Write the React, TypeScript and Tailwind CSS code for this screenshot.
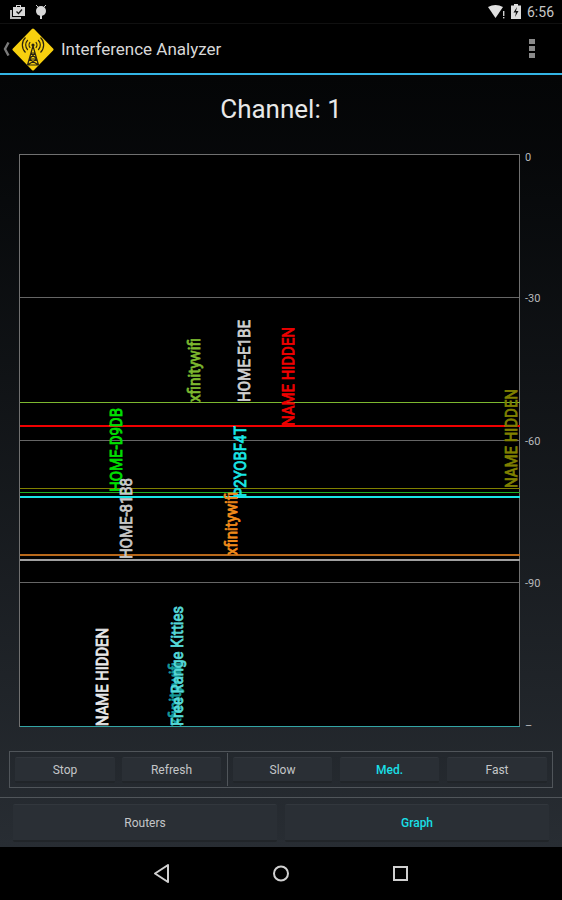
import React from 'react';

const grid = [297, 440, 582];

const lines = [
  { y: 402, color: '#7cb82f', w: 1 },
  { y: 426, color: '#f00000', w: 2 },
  { y: 488, color: '#808000', w: 1 },
  { y: 492, color: '#22b022', w: 1 },
  { y: 497, color: '#19e6e6', w: 2 },
  { y: 555, color: '#b8681a', w: 2 },
  { y: 560, color: '#a0a0a0', w: 2 },
  { y: 726, color: '#33a5a5', w: 1 },
];

const labels = [
  { text: 'xfinitywifi', x: 200, y: 402, len: 64, color: '#7cb82f' },
  { text: 'HOME-E1BE', x: 250, y: 402, len: 82, color: '#d0d0d0' },
  { text: 'NAME HIDDEN', x: 294, y: 426, len: 99, color: '#f00000' },
  { text: 'HOME-D9DB', x: 122, y: 492, len: 84, color: '#00e000' },
  { text: 'HOME-81B8', x: 132, y: 559, len: 81, color: '#c8c8c8' },
  { text: 'P2YOBF4T', x: 246, y: 497, len: 71, color: '#19e6e6' },
  { text: 'xfinitywifi', x: 237, y: 555, len: 63, color: '#f08a1a' },
  { text: 'NAME HIDDEN', x: 517, y: 488, len: 99, color: '#808000' },
  { text: 'NAME HIDDEN', x: 108, y: 726, len: 98, color: '#e8e8e8' },
  { text: 'xfinitywifi', x: 181, y: 726, len: 64, color: '#159a9a' },
  { text: 'Free Range Kitties', x: 183, y: 726, len: 120, color: '#55d8d8' },
];

const axis = [
  { text: '0', y: 161 },
  { text: '-30', y: 302 },
  { text: '-60', y: 445 },
  { text: '-90', y: 587 },
  { text: '–', y: 729 },
];

function Btn({ label, active, className }: { label: string; active?: boolean; className: string }) {
  return (
    <div
      className={`flex items-center justify-center pt-px rounded-[2px] bg-[#2a2f35] border-t border-t-[#32373d] border-b-2 border-b-[#212529] ${className} ${active ? 'text-[#19dfe6] font-medium' : 'text-[#c4c6c8] font-normal'}`}
    >
      {label}
    </div>
  );
}

function Chart() {
  return (
    <svg width="543" height="584" viewBox="19 150 543 584" className="block ml-[19px]">
      <rect x="19.5" y="154.5" width="500" height="572" fill="#000" stroke="#707070" strokeWidth="1" />
      {grid.map((y) => (
        <line key={y} x1="20" x2="519" y1={y + 0.5} y2={y + 0.5} stroke="#666" strokeWidth="1" />
      ))}
      {lines.map((l) => (
        <line key={l.y} x1="20" x2="520" y1={l.w === 1 ? l.y + 0.5 : l.y} y2={l.w === 1 ? l.y + 0.5 : l.y} stroke={l.color} strokeWidth={l.w} />
      ))}
      {labels.map((l, i) => (
        <text
          key={i}
          transform={`rotate(-90 ${l.x} ${l.y})`}
          x={l.x}
          y={l.y}
          fontFamily="Roboto, sans-serif"
          fontSize="17"
          textLength={l.len}
          lengthAdjust="spacingAndGlyphs"
          fill={l.color}
          stroke={l.color}
          strokeWidth="0.8"
        >
          {l.text}
        </text>
      ))}
      {axis.map((a) => (
        <text key={a.text} x="525" y={a.y} fontFamily="Roboto, sans-serif" fontSize="11" fill="#b8babc">
          {a.text}
        </text>
      ))}
    </svg>
  );
}

function Logo() {
  return (
    <svg width="42" height="43" viewBox="0 0 42 43" className="block">
      <path d="M21 2 L40 21.5 L21 41 L2 21.5 Z" fill="#f7d00f" stroke="#f7d00f" strokeLinejoin="round" strokeWidth="3" />
      <g fill="none" stroke="#2a2410" strokeWidth="1.2">
        <path d="M21 18 L15.5 37 M21 18 L26.5 37 M18.5 25 H23.5 M17 31 H25 M15.5 37 H26.5 M18.5 25 L25 31 M23.5 25 L17 31 M17 31 L26.5 37 M25 31 L15.5 37" />
        <path d="M18.2 19.8 A4 4 0 0 1 18.2 14.2 M23.8 19.8 A4 4 0 0 0 23.8 14.2" />
        <path d="M15.8 22 A7 7 0 0 1 15.8 12 M26.2 22 A7 7 0 0 0 26.2 12" />
        <path d="M13.5 24.5 A10.5 10.5 0 0 1 13.5 9.5 M28.5 24.5 A10.5 10.5 0 0 0 28.5 9.5" />
      </g>
      <circle cx="21" cy="17" r="1.6" fill="#2a2410" />
    </svg>
  );
}

export default function App() {
  return (
    <div className="w-[562px] h-[900px] flex flex-col bg-black font-['Roboto',sans-serif] overflow-hidden">
      {/* status bar */}
      <div className="h-[24px] flex items-center px-[8px] border-b border-b-[#101010]">
        <svg width="17" height="16" viewBox="0 0 17 16" className="ml-[1px]">
          <path d="M1 6 H3 V13 H12 V15 H1 Z" fill="#b8b8b8" />
          <path d="M4 3 H7 V1 H12 V3 H16 V12 H4 Z M8 2 V3 H11 V2 Z" fill="#d8d8d8" />
          <path d="M7.5 7.5 L9.5 9.5 L13 5.5" fill="none" stroke="#111" strokeWidth="1.3" />
        </svg>
        <svg width="12" height="16" viewBox="0 0 12 16" className="ml-[9px]">
          <path d="M1 1 L3 3 M11 1 L9 3" stroke="#ccc" strokeWidth="1" />
          <circle cx="6" cy="7" r="5" fill="#d8d8d8" />
          <rect x="5" y="11" width="2" height="4" fill="#d8d8d8" />
        </svg>
        <div className="flex-1" />
        <svg width="17" height="14" viewBox="0 0 17 14">
          <path d="M0 2 Q7.5 -2 15 2 L7.5 13 Z" fill="#e0e0e0" />
          <rect x="15" y="6" width="1.4" height="5" fill="#d0d0d0" />
          <rect x="15" y="12" width="1.4" height="1.4" fill="#d0d0d0" />
        </svg>
        <svg width="10" height="15" viewBox="0 0 10 15" className="ml-[6px]">
          <path d="M3 0 H7 V1.5 H10 V15 H0 V1.5 H3 Z" fill="#dcdcdc" />
          <path d="M6 3 L2.5 8.5 H5 L4 13 L7.5 7 H5 Z" fill="#111" />
        </svg>
        <span className="ml-[6px] pt-px text-[14px] leading-none text-[#c8c8c8]">6:56</span>
      </div>

      {/* action bar */}
      <div className="h-[49px] flex items-center">
        <svg width="7" height="14" viewBox="0 0 7 14" className="ml-[3px] mt-[1px]">
          <path d="M5.5 0.5 L2 7 L5.5 13.5" fill="none" stroke="#7a7a7a" strokeWidth="2.4" />
        </svg>
        <div className="ml-[2px] mt-[1px]">
          <Logo />
        </div>
        <span className="ml-[7px] mt-[2px] text-[17px] text-[#d8d8d8]">Interference Analyzer</span>
        <div className="ml-auto mr-[27px] flex flex-col gap-[2px]">
          <div className="w-[6px] h-[5px] bg-[#8a8a8a]" />
          <div className="w-[6px] h-[5px] bg-[#8a8a8a]" />
          <div className="w-[6px] h-[5px] bg-[#8a8a8a]" />
        </div>
      </div>
      <div className="h-[2px] bg-[#33b5e5]" />

      {/* content */}
      <div className="h-[772px] flex flex-col bg-linear-to-b from-[#040506] to-[#282d33]">
        <div className="h-[75px] flex items-center justify-center pb-[6px] text-[26px] text-[#e8e8e8]">Channel: 1</div>
        <Chart />
        <div className="mt-[17px] mx-[9px] h-[37px] flex items-center px-[5px] border border-[#50555a] text-[12px]">
          <Btn label="Stop" className="w-[100px] h-[26px]" />
          <Btn label="Refresh" className="w-[99px] h-[26px] ml-[7px]" />
          <div className="w-px h-[33px] bg-[#50555a] ml-[6px]" />
          <Btn label="Slow" className="w-[99px] h-[26px] ml-[5px]" />
          <Btn label="Med." active className="w-[99px] h-[26px] ml-[8px]" />
          <Btn label="Fast" className="w-[100px] h-[26px] ml-[8px]" />
        </div>
        <div className="mt-[9px] h-px bg-[#50555a]" />
        <div className="mt-[6px] flex px-[13px] gap-[8px] text-[12px]">
          <Btn label="Routers" className="w-[264px] h-[38px]" />
          <Btn label="Graph" active className="w-[264px] h-[38px]" />
        </div>
      </div>

      {/* nav bar */}
      <div className="h-[53px] flex items-center">
        <svg width="562" height="53" viewBox="0 0 562 53" className="block">
          <path d="M168 18 L155 26.5 L168 35 Z" fill="none" stroke="#d0d0d0" strokeWidth="2" strokeLinejoin="round" />
          <circle cx="281" cy="26.5" r="7" fill="none" stroke="#d0d0d0" strokeWidth="2" />
          <rect x="394" y="20" width="13" height="13" fill="none" stroke="#d0d0d0" strokeWidth="2" />
        </svg>
      </div>
    </div>
  );
}
